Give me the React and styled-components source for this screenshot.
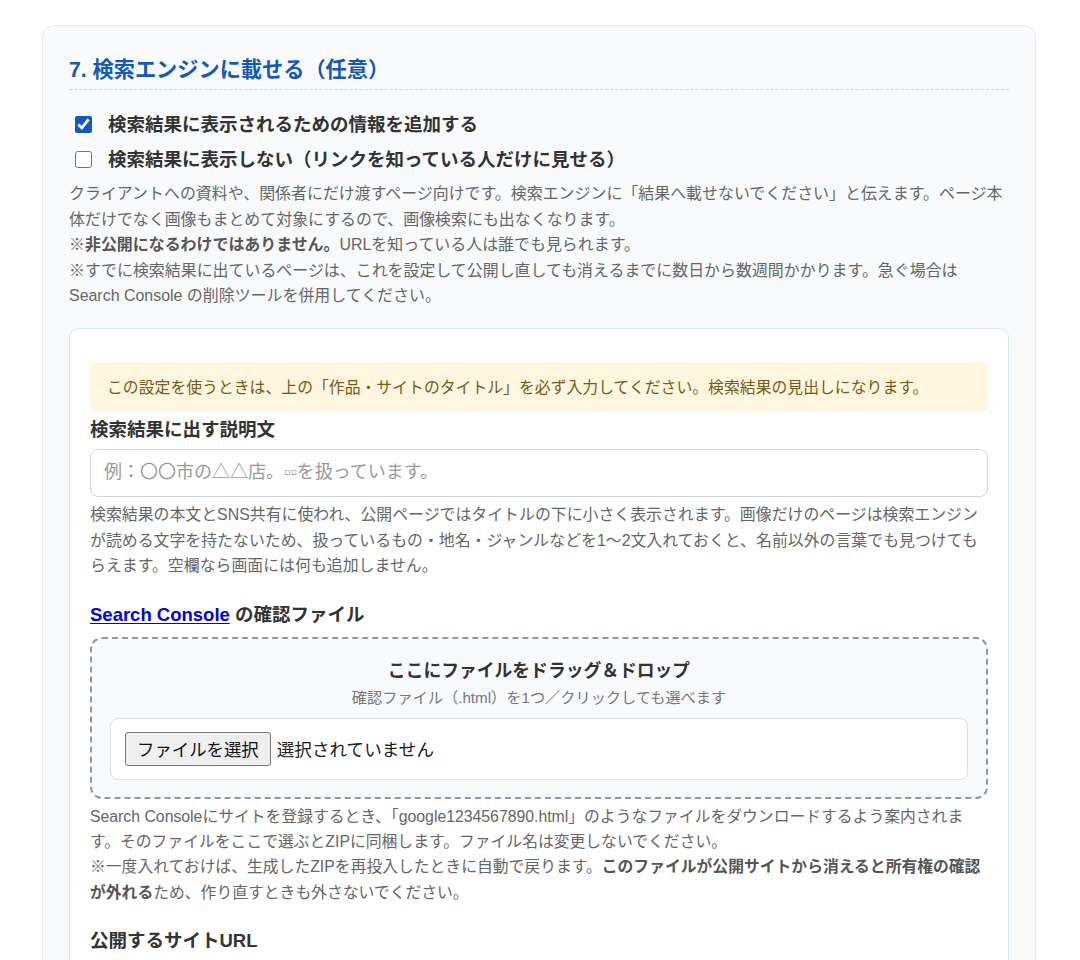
import React from "react";
import styled, { createGlobalStyle } from "styled-components";

const Global = createGlobalStyle`
  html, body { margin: 0; padding: 0; background: #ffffff; }
  body {
    font-family: "Liberation Sans", "Noto Sans CJK JP", sans-serif;
    color: #333;
  }
  * { box-sizing: border-box; }
`;

const Page = styled.div`
  padding: 25px 44px 40px 42px;
`;

const Section = styled.section`
  background: #f8fafc;
  border: 1px solid #e6ebf1;
  border-radius: 12px;
  padding: 30px 26px 24px 26px;
`;

const Heading = styled.h2`
  margin: 0;
  font-size: 21.2px;
  line-height: 28px;
  font-weight: 700;
  color: #1558b8;
  padding-bottom: 5px;
  border-bottom: 1px dashed #cfd6de;
`;

const Options = styled.div`
  display: flex;
  flex-direction: column;
  gap: 8px;
  margin-top: 21px;
`;

const OptionRow = styled.label`
  display: flex;
  align-items: center;
  gap: 16px;
  font-size: 18.5px;
  line-height: 27px;
  font-weight: 700;
  color: #333;
  cursor: pointer;
`;

const Check = styled.input.attrs({ type: "checkbox" })`
  width: 17px;
  height: 17px;
  margin: 0 0 0 6px;
  accent-color: #1558c0;
  flex: none;
`;

const Note = styled.p`
  margin: ${(p) => p.$mt || 0}px 0 0 0;
  font-size: 15.95px;
  line-height: 25.6px;
  color: #666;
  strong { font-weight: 700; color: #555; }
`;

const InnerCard = styled.div`
  margin-top: 19px;
  background: #ffffff;
  border: 1px solid #d9e5f1;
  border-radius: 10px;
  padding: 33px 20px 20px 20px;
`;

const Notice = styled.div`
  background: #fef6de;
  border-radius: 8px;
  padding: 13px 17px 12px 17px;
  font-size: 15.85px;
  line-height: 25px;
  color: #7a5a16;
`;

const Field = styled.div`
  margin-top: ${(p) => p.$mt || 0}px;
`;

const FieldLabel = styled.div`
  font-size: 18.5px;
  line-height: 27px;
  font-weight: 700;
  color: #333;
  margin-bottom: ${(p) => p.$mb || 6}px;
`;

const Link = styled.a`
  color: #0000ee;
  text-decoration: underline;
  text-underline-offset: 2px;
`;

const TextInput = styled.input`
  display: block;
  width: 100%;
  height: 48px;
  border: 1px solid #cfd4da;
  border-radius: 8px;
  padding: 0 13px;
  font-family: inherit;
  font-size: 18px;
  color: #333;
  background: #fff;
  &::placeholder { color: #999; }
`;

const Help = styled.p`
  margin: 5px 0 0 0;
  font-size: ${(p) => p.$size || 15.8}px;
  line-height: ${(p) => p.$lh || 25.6}px;
  color: #666;
  strong { font-weight: 700; color: #555; }
`;

const DropZone = styled.div`
  border: 2px dashed #8e99a8;
  border-radius: 12px;
  background: #f8fafc;
  padding: 19px 18px 17px 18px;
  text-align: center;
`;

const DropTitle = styled.div`
  font-size: 17.8px;
  line-height: 26px;
  font-weight: 700;
  color: #333;
`;

const DropSub = styled.div`
  margin-top: 2px;
  font-size: 15.2px;
  line-height: 23px;
  color: #777;
`;

const FileBox = styled.div`
  margin-top: 9px;
  display: flex;
  align-items: center;
  gap: 6px;
  background: #fff;
  border: 1px solid #dcdfe3;
  border-radius: 8px;
  padding: 13px 13px 13px 14px;
  text-align: left;
`;

const FileButton = styled.button`
  height: 34px;
  padding: 0 11px;
  font-family: inherit;
  font-size: 17.4px;
  color: #111;
  background: #efefef;
  border: 1px solid #767676;
  border-radius: 3px;
  cursor: pointer;
`;

const FileStatus = styled.span`
  font-size: 17.6px;
  color: #222;
`;

export default function App() {
  return (
    <>
      <Global />
      <Page>
        <Section>
          <Heading>7. 検索エンジンに載せる（任意）</Heading>
          <Options>
            <OptionRow>
              <Check defaultChecked />
              検索結果に表示されるための情報を追加する
            </OptionRow>
            <OptionRow>
              <Check />
              検索結果に表示しない（リンクを知っている人だけに見せる）
            </OptionRow>
          </Options>
          <Note $mt={8}>
            クライアントへの資料や、関係者にだけ渡すページ向けです。検索エンジンに「結果へ載せないでください」と伝えます。ページ本体だけでなく画像もまとめて対象にするので、画像検索にも出なくなります。
            <br />
            ※<strong>非公開になるわけではありません。</strong>URLを知っている人は誰でも見られます。
            <br />
            ※すでに検索結果に出ているページは、これを設定して公開し直しても消えるまでに数日から数週間かかります。急ぐ場合は
            <br />
            Search Console の削除ツールを併用してください。
          </Note>

          <InnerCard>
            <Notice>
              この設定を使うときは、上の「作品・サイトのタイトル」を必ず入力してください。検索結果の見出しになります。
            </Notice>

            <Field $mt={4}>
              <FieldLabel>検索結果に出す説明文</FieldLabel>
              <TextInput placeholder="例：〇〇市の△△店。▫▫を扱っています。" />
              <Help $size={15.9}>
                検索結果の本文とSNS共有に使われ、公開ページではタイトルの下に小さく表示されます。画像だけのページは検索エンジンが読める文字を持たないため、扱っているもの・地名・ジャンルなどを1〜2文入れておくと、名前以外の言葉でも見つけてもらえます。空欄なら画面には何も追加しません。
              </Help>
            </Field>

            <Field $mt={22}>
              <FieldLabel $mb={9}>
                <Link href="#">Search Console</Link> の確認ファイル
              </FieldLabel>
              <DropZone>
                <DropTitle>ここにファイルをドラッグ＆ドロップ</DropTitle>
                <DropSub>確認ファイル（.html）を1つ／クリックしても選べます</DropSub>
                <FileBox>
                  <FileButton type="button">ファイルを選択</FileButton>
                  <FileStatus>選択されていません</FileStatus>
                </FileBox>
              </DropZone>
              <Help $lh={25.3}>
                Search Consoleにサイトを登録するとき、「google1234567890.html」のようなファイルをダウンロードするよう案内されます。そのファイルをここで選ぶとZIPに同梱します。ファイル名は変更しないでください。
                <br />
                ※一度入れておけば、生成したZIPを再投入したときに自動で戻ります。
                <strong>このファイルが公開サイトから消えると所有権の確認が外れる</strong>
                ため、作り直すときも外さないでください。
              </Help>
            </Field>

            <Field $mt={22}>
              <FieldLabel>公開するサイトURL</FieldLabel>
              <TextInput placeholder="https://example.com/" />
            </Field>
          </InnerCard>
        </Section>
      </Page>
    </>
  );
}
